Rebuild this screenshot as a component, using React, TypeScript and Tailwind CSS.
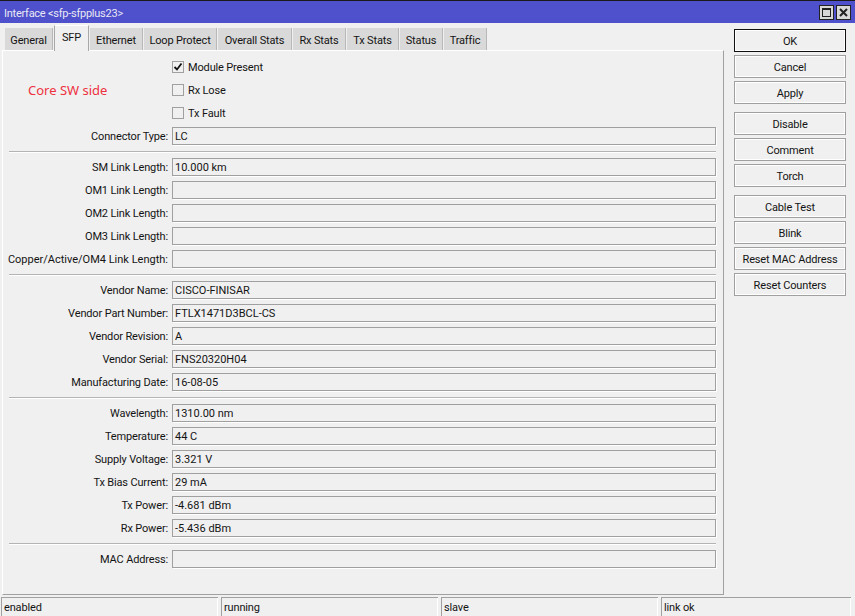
const font = { fontFamily: 'Roboto, "Liberation Sans", Arial, sans-serif' };

const tabs = [
  { name: "General", w: "w-[48px]" },
  { name: "SFP", w: "w-[35px]", active: true },
  { name: "Ethernet", w: "w-[53px]" },
  { name: "Loop Protect", w: "w-[73px]" },
  { name: "Overall Stats", w: "w-[74px]" },
  { name: "Rx Stats", w: "w-[53px]" },
  { name: "Tx Stats", w: "w-[52px]" },
  { name: "Status", w: "w-[43px]" },
  { name: "Traffic", w: "w-[43px]" },
];

const groups: [string, string][][] = [
  [
    ["SM Link Length:", "10.000 km"],
    ["OM1 Link Length:", ""],
    ["OM2 Link Length:", ""],
    ["OM3 Link Length:", ""],
    ["Copper/Active/OM4 Link Length:", ""],
  ],
  [
    ["Vendor Name:", "CISCO-FINISAR"],
    ["Vendor Part Number:", "FTLX1471D3BCL-CS"],
    ["Vendor Revision:", "A"],
    ["Vendor Serial:", "FNS20320H04"],
    ["Manufacturing Date:", "16-08-05"],
  ],
  [
    ["Wavelength:", "1310.00 nm"],
    ["Temperature:", "44 C"],
    ["Supply Voltage:", "3.321 V"],
    ["Tx Bias Current:", "29 mA"],
    ["Tx Power:", "-4.681 dBm"],
    ["Rx Power:", "-5.436 dBm"],
  ],
];

const buttons = [
  ["OK", "Cancel", "Apply"],
  ["Disable", "Comment", "Torch"],
  ["Cable Test", "Blink", "Reset MAC Address", "Reset Counters"],
];

function Field({ label, value }: { label: string; value: string }) {
  return (
    <div className="flex h-[23px] items-center">
      <div className={`w-[165px] pt-[4px] text-right whitespace-nowrap ${label.startsWith("Copper") ? "tracking-[0px]" : ""}`}>{label}</div>
      <div className="ml-[4px] h-[18px] w-[544px] border border-[#a0a0a0] pl-[2px] pt-[1px] leading-[16px] tracking-[0px] shadow-[1px_1px_0_#ffffff]">
        {value}
      </div>
    </div>
  );
}

function Check({ label, checked, note }: { label: string; checked?: boolean; note?: string }) {
  return (
    <div className="flex h-[23px] items-center">
      <div className="w-[165px] pl-[25px] pt-[3px] text-[13px] tracking-normal text-[#ee3040] [font-family:'Noto_Sans',sans-serif]">{note}</div>
      <div className="ml-[4px] flex h-[12px] w-[12px] items-center justify-center border border-[#a0a0a0] bg-[#f0f0f0]">
        {checked && (
          <svg width="10" height="10" viewBox="0 0 10 10">
            <path d="M1.5 5 L4 7.5 L8.5 1.5" fill="none" stroke="#111111" strokeWidth="1.8" />
          </svg>
        )}
      </div>
      <div className="ml-[4px] pt-[3px]">{label}</div>
    </div>
  );
}

function Separator() {
  return (
    <div className="flex h-[8px] items-center pl-[6px]">
      <div className="h-[1px] w-[707px] bg-[#b4b4b4] shadow-[0_1px_0_#ffffff]" />
    </div>
  );
}

export default function App() {
  return (
    <div style={font} className="flex h-[616px] w-[855px] flex-col overflow-hidden bg-[#f0f0f0] text-[11px] tracking-[-0.15px] text-[#141414]">
      <div className="flex h-[23px] items-center justify-between border-t border-[#1a1a1a] bg-[#4e50cc] pl-[4px] pr-[4px] text-[#e8e8f4]">
        <span className="pt-[4px] tracking-[-0.25px]">Interface &lt;sfp-sfpplus23&gt;</span>
        <div className="flex gap-[2px]">
          <div className="flex h-[15px] w-[15px] items-center justify-center border border-[#222222] bg-[#d8d8d8]">
            <div className="h-[9px] w-[9px] border border-[#222222] border-t-2" />
          </div>
          <div className="flex h-[15px] w-[15px] items-center justify-center border border-[#222222] bg-[#d8d8d8]">
            <svg width="9" height="9" viewBox="0 0 9 9">
              <path d="M1 1 L8 8 M8 1 L1 8" stroke="#222222" strokeWidth="2" />
            </svg>
          </div>
        </div>
      </div>

      <div className="flex flex-1">
        <div className="flex w-[724px] flex-col">
          <div className="mt-[2px] flex h-[25px] items-end gap-[1px] pl-[5px]">
            {tabs.map((t) => (
              <div
                key={t.name}
                className={
                  t.active
                    ? `${t.w} relative top-[1px] flex h-[26px] items-center justify-center border-x border-t border-x-[#a8a8a8] border-t-white bg-[#f0f0f0] pb-[1px]`
                    : `${t.w} flex h-[22px] items-center justify-center border-r border-[#b8b8b8] bg-[#d9d9d9] pt-[4px]`
                }
              >
                {t.name}
              </div>
            ))}
          </div>

          <div className="ml-[2px] h-[545px] border-r border-b border-l border-t border-r-[#a0a0a0] border-b-[#a0a0a0] border-l-white border-t-white pt-[4px]">
            <Check label="Module Present" checked />
            <Check label="Rx Lose" note="Core SW side" />
            <Check label="Tx Fault" />
            <Field label="Connector Type:" value="LC" />
            {groups.map((g, i) => (
              <div key={i}>
                <Separator />
                {g.map(([label, value]) => (
                  <Field key={label} label={label} value={value} />
                ))}
              </div>
            ))}
            <Separator />
            <Field label="MAC Address:" value="" />
          </div>
        </div>

        <div className="flex w-[122px] flex-col gap-[8px] pl-[10px] pt-[6px]">
          {buttons.map((g, i) => (
            <div key={i} className="flex flex-col gap-[3px]">
              {g.map((b) => (
                <div
                  key={b}
                  className={
                    b === "OK"
                      ? "flex h-[23px] items-center justify-center border border-[#111111] pt-[3px] shadow-[inset_0_0_0_1px_#ffffff]"
                      : "flex h-[23px] items-center justify-center border border-[#a0a0a0] pt-[3px] shadow-[inset_0_0_0_1px_#ffffff]"
                  }
                >
                  {b}
                </div>
              ))}
            </div>
          ))}
        </div>
      </div>

      <div className="flex h-[19px] gap-[3px] pl-[1px]">
        {["enabled", "running", "slave", "link ok"].map((s, i) => (
          <div
            key={s}
            className={`${i === 3 ? "w-[190px]" : "w-[217px]"} border-t border-l border-[#a0a0a0] pl-[2px] leading-[19px] shadow-[inset_-1px_0_0_#ffffff]`}
          >
            {s}
          </div>
        ))}
      </div>
    </div>
  );
}
